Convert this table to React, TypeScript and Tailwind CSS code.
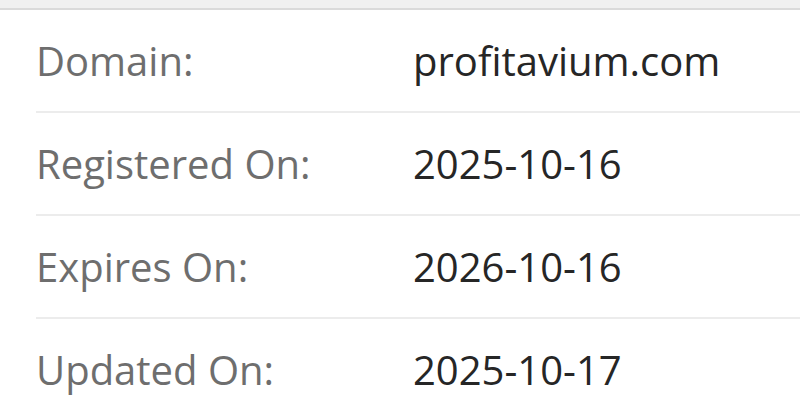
export default function App() {
  const rows = [
    { label: "Domain:", value: "profitavium.com" },
    { label: "Registered On:", value: "2025-10-16" },
    { label: "Expires On:", value: "2026-10-16" },
    { label: "Updated On:", value: "2025-10-17" },
  ]

  return (
    <div className="h-[400px] w-[800px] overflow-hidden bg-white" style={{ fontFamily: '"Open Sans", "Noto Sans", sans-serif' }}>
      {/* top strip */}
      <div className="h-[10px] border-b-2 border-[#dadada] bg-[#f0f0f0]" />

      <div className="pl-[36px]">
        {rows.map((row) => (
          <div key={row.label} className="flex h-[103px] items-center border-b-2 border-[#ececec] text-[40px] leading-none">
            <div className="w-[377px] text-[#6e6e6e]">{row.label}</div>
            <div className="text-[#262626]">{row.value}</div>
          </div>
        ))}
      </div>
    </div>
  )
}
